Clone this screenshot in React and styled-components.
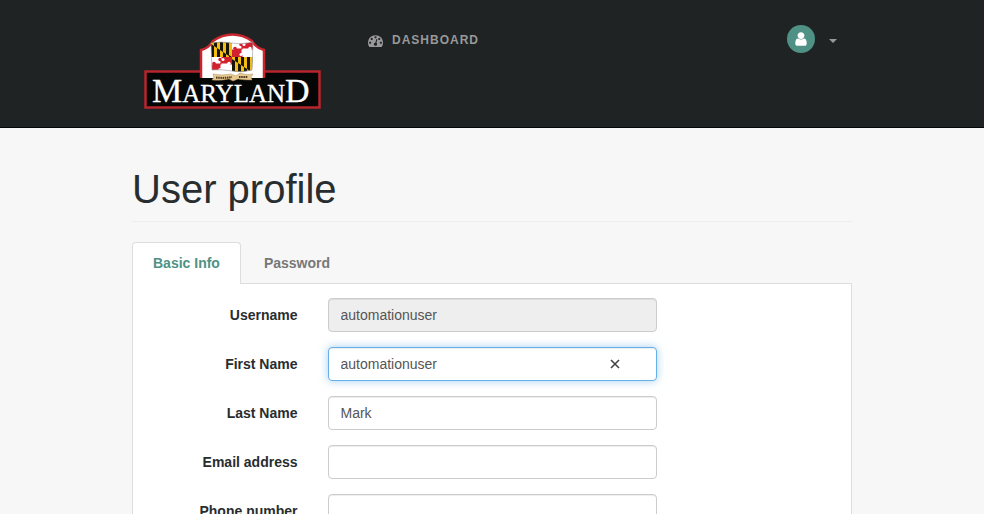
import React, { useState } from "react";
import styled, { createGlobalStyle } from "styled-components";

const GlobalStyle = createGlobalStyle`
  *, *::before, *::after { box-sizing: border-box; }
  html { background: #f7f7f7; }
  body {
    margin: 0;
    background: #f7f7f7;
    color: #282d30;
    font-family: "Liberation Sans", Arial, sans-serif;
    font-size: 14px;
    line-height: 20px;
  }
`;

const Header = styled.header`
  background: #1f2324;
  border-bottom: 1px solid #050808;
`;

const Container = styled.div`
  width: 100%;
  max-width: 750px;
  margin: 0 auto;
  padding: 0 15px;
`;

const HeaderRow = styled(Container)`
  display: flex;
  align-items: flex-start;
  padding-bottom: 16px;
`;

const Brand = styled.a`
  display: block;
  padding: 31px 10px 0;

  svg { display: block; }
`;

const Nav = styled.nav`
  flex: 1;
  padding: 30px 35px 0;
`;

const NavLink = styled.a`
  display: flex;
  width: max-content;
  align-items: center;
  gap: 9px;
  color: #999999;
  font-size: 12px;
  font-weight: bold;
  letter-spacing: 1px;
  text-decoration: none;
  text-transform: uppercase;
`;

const UserButton = styled.button`
  display: flex;
  align-items: center;
  gap: 14px;
  margin: 25px 15px 0 0;
  padding: 0;
  border: 0;
  background: none;
  color: #999999;
  cursor: pointer;
`;

const Avatar = styled.span`
  display: grid;
  place-items: center;
  width: 28px;
  height: 28px;
  border-radius: 50%;
  background: #4f9184;
  color: #ffffff;
`;

const Caret = styled.span`
  margin-top: 4px;
  border: 4px solid transparent;
  border-top-color: currentColor;
  border-bottom: 0;
`;

const Title = styled.h1`
  margin: 40px 0 20px;
  padding-bottom: 10px;
  border-bottom: 1px solid #eeeeee;
  font-size: 40px;
  font-weight: normal;
  line-height: 43px;
`;

const Tabs = styled.div`
  display: flex;
  gap: 2px;
  margin-bottom: -1px;
`;

const Tab = styled.button`
  position: relative;
  padding: 10px 20px 11px;
  border: 1px solid ${(p) => (p.$active ? "#dddddd" : "transparent")};
  border-bottom: 0;
  border-radius: 4px 4px 0 0;
  background: ${(p) => (p.$active ? "#ffffff" : "transparent")};
  color: ${(p) => (p.$active ? "#4f9184" : "#777777")};
  font: bold 14px/20px "Liberation Sans", Arial, sans-serif;
  cursor: pointer;
`;

const Panel = styled.form`
  display: flex;
  flex-direction: column;
  gap: 15px;
  padding: 14px 0 20px;
  border: 1px solid #dddddd;
  background: #ffffff;
`;

const Row = styled.div`
  display: grid;
  grid-template-columns: 25% 50%;
  align-items: center;
`;

const Label = styled.label`
  padding-right: 15px;
  font-weight: bold;
  text-align: right;
`;

const Control = styled.div`
  position: relative;
  margin: 0 15px;
`;

const Input = styled.input`
  display: block;
  width: 100%;
  height: 34px;
  padding: 6px 12px;
  border: 1px solid ${(p) => (p.$highlighted ? "#66afe9" : "#cccccc")};
  border-radius: 4px;
  outline: 0;
  background: #ffffff;
  box-shadow: inset 0 1px 1px rgba(0, 0, 0, 0.075)
    ${(p) => (p.$highlighted ? ", 0 0 8px rgba(102, 175, 233, 0.6)" : "")};
  color: #555555;
  font: 14px/20px "Liberation Sans", Arial, sans-serif;

  &:disabled { background: #eeeeee; }
`;

const ClearButton = styled.button`
  position: absolute;
  top: 7px;
  right: 32px;
  display: grid;
  place-items: center;
  width: 20px;
  height: 20px;
  padding: 0;
  border: 0;
  background: none;
  color: #444444;
  cursor: pointer;
`;

function Logo() {
  return (
    <svg width="181" height="80" viewBox="142 31 181 80" role="img" aria-label="Maryland">
      <defs>
        <clipPath id="flag">
          <path d="M211 43Q221 41 231 43T253 42L252 70Q242 73 232 71T212 70Z" />
        </clipPath>
        <g id="calvert">
          <path fill="#191506" d="M0 0H21V15H0Z" />
          <path
            fill="#f3bd12"
            d="M0 0H3V4L0 2ZM6 0H9V8L6 6ZM12 0H15V12L12 10ZM18 0H21V15L18 13ZM3 4L6 6V15H3ZM9 8L12 10V15H9ZM15 12L18 14V15H15Z"
          />
        </g>
        <g id="crossland">
          <path fill="#fff" d="M0 0H21V15H0Z" />
          <path fill="#d3202f" d="M10.5 0H21V7.500H10.5ZM0 7.500H10.5V15H0Z" />
          <path stroke="#d3202f" strokeWidth="2.200" d="M10.500 2V7.500M3 7.500H10.500" />
          <path stroke="#fff" strokeWidth="2" d="M10.500 7.500V13M10.500 7.500H18" />
          <g fill="#d3202f">
            <circle cx="3" cy="6.500" r="1.800" />
            <circle cx="3" cy="9" r="1.600" />
            <circle cx="9" cy="2.500" r="1.700" />
          </g>
          <g fill="#fff">
            <circle cx="18" cy="6.500" r="1.700" />
            <circle cx="12" cy="2.500" r="1.500" />
            <circle cx="9" cy="12.500" r="1.600" />
          </g>
        </g>
      </defs>
      <path fill="#050606" stroke="#b7252d" strokeWidth="2.500" d="M145.500 71.500H319.500V107.500H145.500Z" />
      <path
        fill="#fff"
        stroke="#c8252e"
        strokeWidth="2.500"
        d="M201 78V50Q209 48 213 41Q222 34.500 232.500 34.500T252 41Q256 48 264 50V78"
      />
      <g clipPath="url(#flag)">
        <use href="#calvert" x="211" y="42" />
        <use href="#crossland" x="232" y="42" />
        <use href="#crossland" x="211" y="57" />
        <use href="#calvert" x="232" y="57" />
      </g>
      <path
        fill="none"
        stroke="#999"
        strokeWidth="0.600"
        d="M211 43Q221 41 231 43T253 42L252 70Q242 73 232 71T212 70Z"
      />
      <text
        x="152"
        y="102"
        fill="#fff"
        stroke="#fff"
        strokeWidth="0.300"
        fontFamily="Liberation Serif, Times New Roman, serif"
        fontSize="34"
      >
        M<tspan fontSize="25">ARYLAN</tspan>D
      </text>
      <path
        fill="#e8cb91"
        stroke="#a68955"
        strokeWidth="0.500"
        d="M213 74Q222 76 231 74L236 76L240 73Q247 76 253 74L251 77L252 80Q243 80 238 79L233 81L229 79Q221 81 212 80L214 77Z"
      />
      <path
        fill="none"
        stroke="#4e3b20"
        strokeWidth="2"
        strokeDasharray="1.500 0.700"
        d="M216 77.500Q224 78.500 232 77M239 77H248"
      />
    </svg>
  );
}

function DashboardIcon() {
  return (
    <svg width="15" height="15" viewBox="0 0 1792 1792" fill="currentColor" aria-hidden="true">
      <path d="M384 1152q0-53-37.500-90.500t-90.500-37.500-90.500 37.500-37.500 90.500 37.500 90.500 90.500 37.500 90.500-37.500 37.500-90.500zm192-448q0-53-37.500-90.500t-90.500-37.500-90.500 37.500-37.500 90.500 37.500 90.500 90.500 37.500 90.500-37.500 37.500-90.500zm428 481l101-382q6-26-7.500-48.500t-38.500-29.500-48 6.500-30 39.500l-101 382q-60 5-107 43.500t-63 98.500q-20 77 20 146t117 89 146-20 89-117q16-60-6-117t-72-91zm660-33q0-53-37.500-90.500t-90.500-37.500-90.500 37.500-37.500 90.500 37.500 90.500 90.500 37.500 90.500-37.500 37.500-90.500zm-640-640q0-53-37.500-90.500t-90.500-37.500-90.500 37.500-37.500 90.500 37.500 90.500 90.500 37.500 90.500-37.500 37.500-90.500zm448 192q0-53-37.500-90.500t-90.500-37.500-90.500 37.500-37.500 90.500 37.500 90.500 90.500 37.500 90.500-37.500 37.500-90.500zm320 448q0 261-141 483-19 29-54 29h-1402q-35 0-54-29-141-221-141-483 0-182 71-348t191-286 286-191 348-71 348 71 286 191 191 286 71 348z" />
    </svg>
  );
}

function UserIcon() {
  return (
    <svg width="16" height="16" viewBox="0 0 1792 1792" fill="currentColor" aria-hidden="true">
      <path d="M1536 1399q0 109-62.500 187t-150.500 78h-854q-88 0-150.500-78t-62.500-187q0-85 8.500-160.500t31.500-152 58.500-131 94-89 134.500-34.500q131 128 313 128t313-128q76 0 134.500 34.500t94 89 58.500 131 31.500 152 8.500 160.500zm-256-887q0 159-112.500 271.500t-271.500 112.500-271.500-112.500-112.500-271.500 112.500-271.500 271.500-112.500 271.500 112.500 112.500 271.500z" />
    </svg>
  );
}

const FIELDS = [
  { id: "username", label: "Username", value: "automationuser", disabled: true },
  { id: "firstName", label: "First Name", value: "automationuser", clearable: true },
  { id: "lastName", label: "Last Name", value: "Mark" },
  { id: "email", label: "Email address", value: "", type: "email" },
  { id: "phone", label: "Phone number", value: "", type: "tel" },
];

export default function App() {
  const [values, setValues] = useState(() =>
    Object.fromEntries(FIELDS.map((f) => [f.id, f.value]))
  );
  const [tab, setTab] = useState("Basic Info");
  const update = (id, value) => setValues((prev) => ({ ...prev, [id]: value }));

  return (
    <>
      <GlobalStyle />
      <Header>
        <HeaderRow>
          <Brand href="#home">
            <Logo />
          </Brand>
          <Nav>
            <NavLink href="#dashboard">
              <DashboardIcon />
              Dashboard
            </NavLink>
          </Nav>
          <UserButton type="button" aria-label="User menu">
            <Avatar>
              <UserIcon />
            </Avatar>
            <Caret />
          </UserButton>
        </HeaderRow>
      </Header>
      <Container as="main">
        <Title>User profile</Title>
        <Tabs role="tablist">
          {["Basic Info", "Password"].map((name) => (
            <Tab
              key={name}
              type="button"
              role="tab"
              aria-selected={tab === name}
              $active={tab === name}
              onClick={() => setTab(name)}
            >
              {name}
            </Tab>
          ))}
        </Tabs>
        <Panel>
          {FIELDS.map((f) => (
            <Row key={f.id}>
              <Label htmlFor={f.id}>{f.label}</Label>
              <Control>
                <Input
                  id={f.id}
                  type={f.type || "text"}
                  value={values[f.id]}
                  disabled={f.disabled}
                  $highlighted={f.clearable}
                  onChange={(e) => update(f.id, e.target.value)}
                />
                {f.clearable && (
                  <ClearButton
                    type="button"
                    aria-label={`Clear ${f.label}`}
                    onClick={() => update(f.id, "")}
                  >
                    <svg width="10" height="10" viewBox="0 0 10 10" stroke="currentColor" strokeWidth="1.600">
                      <path d="M1 1L9 9M9 1L1 9" />
                    </svg>
                  </ClearButton>
                )}
              </Control>
            </Row>
          ))}
        </Panel>
      </Container>
    </>
  );
}
